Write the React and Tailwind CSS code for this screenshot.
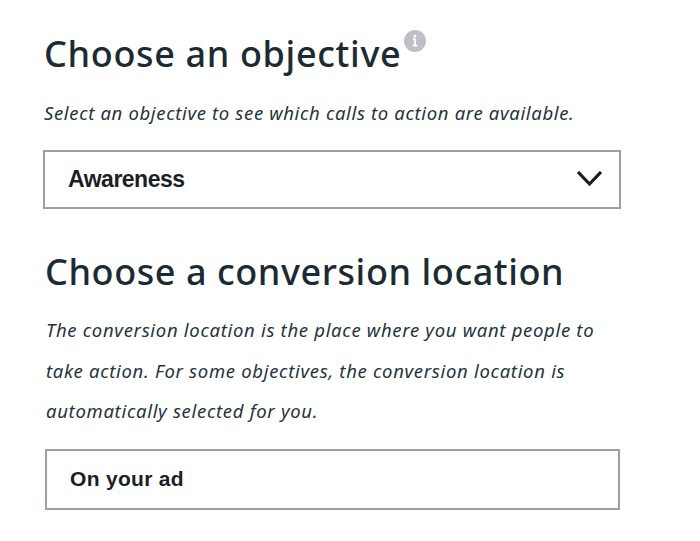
import { useState } from "react";

const OBJECTIVE = "Awareness";

export default function App() {
  const [open, setOpen] = useState(false);

  return (
    <div className="h-[541px] w-[700px] overflow-hidden bg-white pl-[43px] pt-[30px] font-['Noto_Sans',sans-serif] text-[#1c2b33]">
      {/* Objective */}
      <section>
        <div className="flex h-[48px] items-start pl-px">
          <h1 className="whitespace-nowrap text-[36px] font-medium leading-[48px] tracking-[0.65px]">Choose an objective</h1>
          <InfoIcon />
        </div>
        <p className="mt-[20px] whitespace-nowrap pl-px text-[18.5px] italic leading-[30px] tracking-[0.65px] text-[#25343c]">
          Select an objective to see which calls to action are available.
        </p>
        <button
          onClick={() => setOpen(!open)}
          aria-expanded={open}
          className="mt-[22px] flex h-[59px] w-[578px] items-center justify-between border-2 border-[#9a9fa8] pl-[23px] pr-[16px] text-[#1c1e26]"
        >
          <span className="font-['Liberation_Sans',sans-serif] text-[23px] font-bold tracking-[-0.5px]">{OBJECTIVE}</span>
          <svg width="28" height="18" viewBox="0 0 28 18" fill="none" stroke="currentColor" strokeWidth="3.2">
            <path d="M3 1L14.5 13L26 1" />
          </svg>
        </button>
      </section>

      {/* Conversion location */}
      <section className="mt-[39px] pl-[2px]">
        <h1 className="whitespace-nowrap text-[36px] font-medium leading-[48px] tracking-[0.57px]">Choose a conversion location</h1>
        <p className="mt-[14px] whitespace-nowrap pl-px text-[18.5px] italic leading-[40.5px] tracking-[0.69px] text-[#25343c]">
          The conversion location is the place where you want people to
          <br />
          take action. For some objectives, the conversion location is
          <br />
          automatically selected for you.
        </p>
        <div className="mt-[17px] flex h-[61px] w-[575px] items-center border-2 border-[#9a9fa8] pl-[23px] text-[#1c1e26]">
          <span className="font-['Liberation_Sans',sans-serif] text-[21px] font-bold tracking-[0.3px]">On your ad</span>
        </div>
      </section>
    </div>
  );
}

/** Round grey info badge next to the title */
function InfoIcon() {
  return (
    <svg className="ml-[2px]" width="24" height="24" viewBox="0 0 24 24">
      <circle cx="12" cy="11" r="11" fill="#bec0c5" />
      <path d="M9.8 9.2h2.2v6.6M9.6 15.6h4.8" stroke="#fff" strokeWidth="1.8" fill="none" />
      <circle cx="11.8" cy="6" r="1.5" fill="#fff" />
    </svg>
  );
}
